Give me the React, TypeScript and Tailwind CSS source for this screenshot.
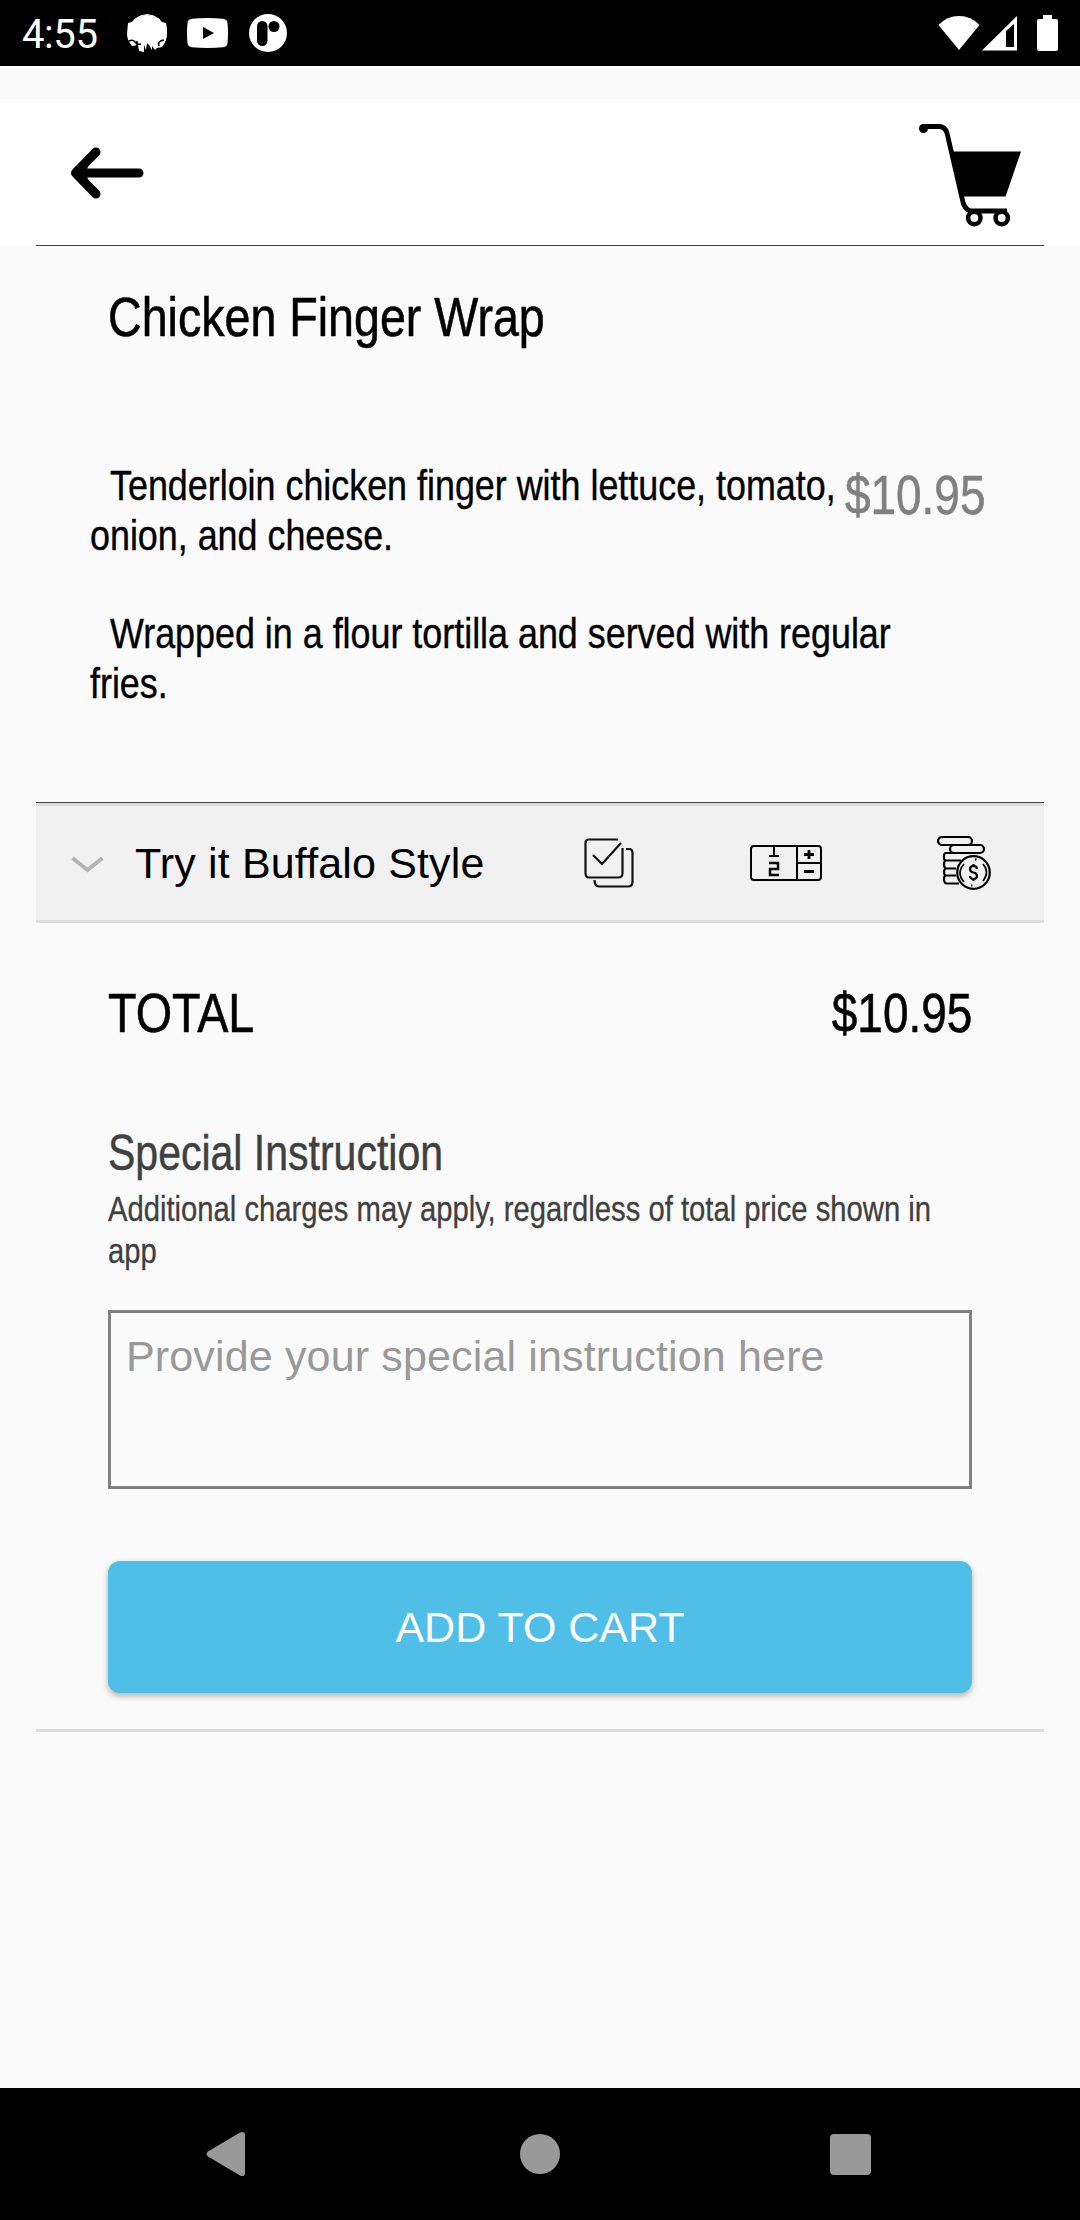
// Status bar across the top of the phone
function StatusBar() {
  return (
    <div className="flex h-[66px] items-center justify-between bg-black pl-[22px] pr-[22px] text-white">
      <div className="flex items-center">
        <p className="w-[104px] pt-[4px] font-['Roboto',sans-serif] text-[40px] leading-[62px] tracking-[-0.4px]">
          4:55
        </p>
        <svg className="h-[42px] w-[42px]" viewBox="0 0 42 42" fill="currentColor">
          <path d="M6 10Q11 3 21 3Q31 3 36 10L40 11Q41.500 16 41 22Q41 29 36 35L31 36L29 38L26 34L26 38L23 33L21 31L20 38L18 33V40L13 39L12 33L6 34Q1 28 1 22L2 11Z" />
          <path d="M8 8Q21 -3 34 8" fill="none" stroke="currentColor" strokeWidth="1" />
          <path d="M3 29Q7 27 9 30Q11 33 15 32M11 29V36M33 34Q31 29 38 28" fill="none" stroke="#000" strokeWidth="1.600" />
        </svg>
        <svg className="ml-[19px] h-[30px] w-[41px]" viewBox="0 0 41 30">
          <path d="M5 0.800Q20 -0.600 36 0.800Q40 1.200 40.500 5Q41.500 15 40.500 25Q40 28.800 36 29.200Q20 30.600 5 29.200Q1 28.800 0.500 25Q-0.500 15 0.500 5Q1 1.200 5 0.800Z" fill="currentColor" />
          <path d="M16 9L27 15L16 21Z" fill="#000" />
        </svg>
        <svg className="ml-[21px] h-[38px] w-[38px]" viewBox="0 0 38 38">
          <circle cx="19" cy="19" r="19" fill="currentColor" />
          <rect x="8" y="7" width="10.500" height="25" rx="5.200" fill="#000" />
          <circle cx="25" cy="12.500" r="5.500" fill="#000" />
        </svg>
      </div>
      <div className="flex items-center">
        <svg className="h-[36px] w-[42px]" viewBox="0 0 42 36" fill="currentColor">
          <path d="M21 35L0.500 10Q9 1 21 1Q33 1 41.500 10Z" />
        </svg>
        <svg className="ml-[2px] h-[36px] w-[36px]" viewBox="0 0 36 36" fill="currentColor">
          <path d="M0 35.500L35 1V35.500ZM24 16V32H32V9Z" fillRule="evenodd" />
        </svg>
        <svg className="ml-[19px] h-[36px] w-[21px]" viewBox="0 0 21 36" fill="currentColor">
          <path d="M6 0H15V4H19Q21 4 21 6V34Q21 36 19 36H2Q0 36 0 34V6Q0 4 2 4H6Z" />
        </svg>
      </div>
    </div>
  );
}

// Back arrow and cart
function Header() {
  return (
    <header className="bg-white px-9">
      <div className="flex h-[143px] justify-between border-b border-[#404040] pl-[33px] pr-[23px]">
        <svg className="mt-[43px] h-[54px] w-[76px]" viewBox="0 0 76 54" fill="none" stroke="#000" strokeWidth="9" strokeLinecap="round" strokeLinejoin="round">
          <path d="M27 6L6.500 27L27 48M6.500 27H70" />
          <path d="M9 27L17 19V35Z" fill="#000" strokeWidth="3" />
        </svg>
        <svg className="mt-[21px] h-[106px] w-[102px]" viewBox="0 0 102 106">
          <circle cx="4.500" cy="4.500" r="4.500" />
          <path d="M3 2.500H20Q26 2.500 28 9L43 74Q45 86 52 87H88" fill="none" stroke="#000" strokeWidth="4.800" />
          <path d="M33 27.500H102L86.500 72.500H44Z" />
          <circle cx="55.300" cy="94" r="6.200" fill="#fff" stroke="#000" strokeWidth="4.500" />
          <circle cx="82.700" cy="94" r="6.200" fill="#fff" stroke="#000" strokeWidth="4.500" />
        </svg>
      </div>
    </header>
  );
}

function CheckIcon() {
  return (
    <svg className="h-[50px] w-[50px]" viewBox="0 0 50 50" fill="none" stroke="#111" strokeWidth="2.200">
      <path d="M34 1.500H5Q1.500 1.500 1.500 5V35Q1.500 39.500 5 39.500H34Q38.500 39.500 38.500 35.500V10" />
      <path d="M9 17L18 26L37 5" />
      <path d="M42 11H45Q48.500 11 48.500 15V44Q48.500 48.500 44 48.500H15Q10.500 48.500 10.500 42" />
    </svg>
  );
}

function CounterIcon() {
  return (
    <svg className="h-[36px] w-[72px]" viewBox="0 0 72 36" fill="none" stroke="#000" strokeWidth="2">
      <rect x="1" y="1" width="70" height="34" rx="3" />
      <path d="M47 1V35M47 18H71M24 1V11M19 11H29" />
      <path d="M19 18H28V24H20V30H29" strokeWidth="2.500" />
      <path d="M54 9.500H64M59 5V14M54 26.500H64" strokeWidth="2.800" />
    </svg>
  );
}

function CoinsIcon() {
  return (
    <svg className="h-[54px] w-[54px]" viewBox="0 0 54 54" fill="none" stroke="#000" strokeWidth="2.200">
      <rect x="1" y="1" width="34" height="8" rx="4" />
      <rect x="13" y="9" width="34" height="8" rx="4" />
      <path d="M30 17H9Q7 17 7 20V22Q7 24.500 9 24.500H24M9 24.500Q7 25 7 28Q7 32 9 32.500H19M9 32.500Q7 33 7 36Q7 39.500 9 39.500H19M9 39.500Q7 40 7 43Q7 47.500 10 47.500H22" />
      <circle cx="36.500" cy="36.500" r="16.300" />
      <path d="M27 28Q19 37 27 46M46 45Q53 36 46 28" strokeWidth="1.700" />
      <path d="M40 33Q40 30 36.500 30Q33 30 33 33Q33 36 36.500 36.500Q40 37 40 40Q40 43 36.500 43Q33 43 33 40M36.500 28V30M36.500 43V45" />
      <path d="M38 23.500H39.500M34 49.500H35.500" />
    </svg>
  );
}

// Collapsed option group
function OptionBar() {
  return (
    <div className="mx-9 flex h-[121px] flex-col border-t border-[#404040]">
      <div className="flex grow items-center border-y-[3px] border-[#dcdcdc] bg-[#f1f1f1] pl-[35px] pr-[53px]">
        <svg className="mt-[3px] h-[18px] w-[33px]" viewBox="0 0 33 18" fill="none" stroke="#b5b5b5" strokeWidth="4">
          <path d="M1.500 2L16.500 14L31.500 2" />
        </svg>
        <p className="ml-[31px] w-[449px] whitespace-nowrap text-[43px] leading-[50px] tracking-[0.15px]">
          Try it Buffalo Style
        </p>
        <CheckIcon />
        <div className="ml-[116px]">
          <CounterIcon />
        </div>
        <div className="ml-[115px]">
          <CoinsIcon />
        </div>
      </div>
    </div>
  );
}

// Software navigation buttons
function NavBar() {
  return (
    <div className="flex h-[132px] items-center justify-between bg-black pl-[206px] pr-[209px]">
      <svg className="h-[46px] w-[40px]" viewBox="0 0 40 46" fill="#999">
        <path d="M2 20.500L34 1.500Q39 -0.500 39 4V42Q39 46.500 34 44.500L2 25.500Q-1 23 2 20.500Z" />
      </svg>
      <div className="ml-1 h-[40px] w-[40px] rounded-full bg-[#999]" />
      <div className="h-[41px] w-[41px] rounded-[4px] bg-[#999]" />
    </div>
  );
}

export default function App() {
  return (
    <div className="flex h-[2220px] w-[1080px] flex-col overflow-hidden bg-[#fafafa] font-['Liberation_Sans',Arial,sans-serif] text-black">
      <StatusBar />
      <div className="h-[37px]" />
      <Header />

      <main className="grow">
        {/* Item */}
        <h1 className="mt-[39px] ml-[108px] origin-left scale-x-[0.832] whitespace-nowrap text-[56px] leading-[64px] [-webkit-text-stroke:0.6px]">
          Chicken Finger Wrap
        </h1>
        <div className="mt-[111px] flex h-[342px] items-start pl-[90px]">
          <div className="w-[755px] origin-left scale-x-[0.834] whitespace-nowrap text-[43px] leading-[50px] [-webkit-text-stroke:0.4px]">
            <p className="indent-[24px]">
              Tenderloin chicken finger with lettuce, tomato,
              <br />
              onion, and cheese.
            </p>
            <p className="mt-12 indent-[24px]">
              Wrapped in a flour tortilla and served with regular
              <br />
              fries.
            </p>
          </div>
          <p className="mt-[3px] origin-left scale-x-[0.82] text-[56px] leading-[64px] text-[#808080] [-webkit-text-stroke:0.6px]">
            $10.95
          </p>
        </div>

        <OptionBar />

        {/* Total */}
        <div className="mt-[58px] flex justify-between px-[108px] text-[56px] leading-[64px] [-webkit-text-stroke:0.6px]">
          <p className="origin-left scale-x-[0.835]">TOTAL</p>
          <p className="origin-right scale-x-[0.82]">$10.95</p>
        </div>

        {/* Special instruction */}
        <div className="mt-[83px] px-[108px] text-[#404040]">
          <h2 className="origin-left scale-x-[0.82] text-[50px] leading-[50px] [-webkit-text-stroke:0.5px]">
            Special Instruction
          </h2>
          <p className="mt-[10px] origin-left scale-x-[0.835] whitespace-nowrap text-[35px] leading-[42px] [-webkit-text-stroke:0.3px]">
            Additional charges may apply, regardless of total price shown in
            <br />
            app
          </p>
          <textarea
            className="mt-[38px] block h-[179px] w-full resize-none overflow-hidden border-[3px] border-[#808080] px-[15px] pt-[18px] text-[43px] leading-[50px] tracking-[0.15px] placeholder:text-[#999]"
            placeholder="Provide your special instruction here"
          />
          <button className="mt-[72px] block h-[132px] w-full rounded-[12px] bg-[#4fbfe8] text-[43px] text-white shadow-[0_3px_6px_rgba(0,0,0,0.3)]">
            ADD TO CART
          </button>
        </div>
        <div className="mx-9 mt-9 h-[3px] bg-[#dcdcdc]" />
      </main>

      <NavBar />
    </div>
  );
}
